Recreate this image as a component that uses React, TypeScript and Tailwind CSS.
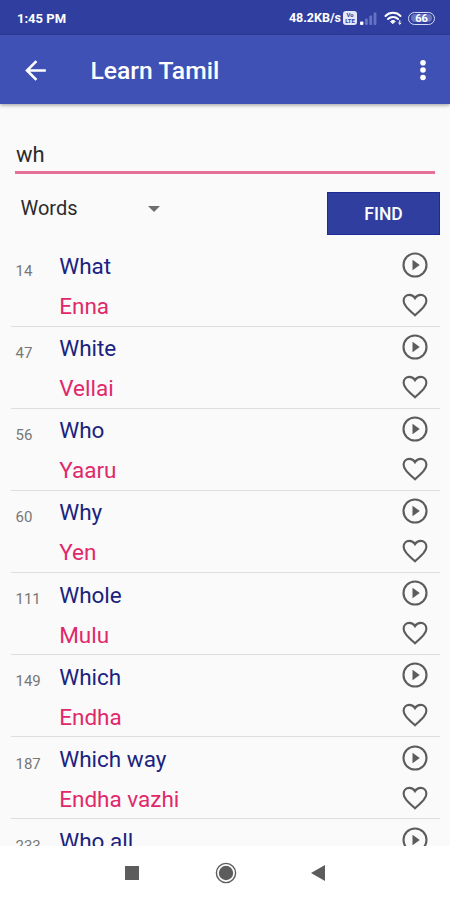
import React, { useState } from 'react';

const words = [
  { id: 14, english: "What", tamil: "Enna" },
  { id: 47, english: "White", tamil: "Vellai" },
  { id: 56, english: "Who", tamil: "Yaaru" },
  { id: 60, english: "Why", tamil: "Yen" },
  { id: 111, english: "Whole", tamil: "Mulu" },
  { id: 149, english: "Which", tamil: "Endha" },
  { id: 187, english: "Which way", tamil: "Endha vazhi" },
  { id: 233, english: "Who all", tamil: "" },
];

const PlayIcon: React.FC = () => (
  <svg viewBox="0 0 24 24" className="h-[30px] w-[30px]">
    <circle cx="12" cy="12" r="9.2" fill="none" stroke="#5c5c5c" strokeWidth="1.7" />
    <path d="M10 16.2l5.8-4.2L10 7.8z" fill="#5c5c5c" />
  </svg>
);

const HeartIcon: React.FC = () => (
  <svg viewBox="0 0 24 24" className="h-[30px] w-[30px]" fill="none" stroke="#5c5c5c" strokeWidth="1.7">
    <path d="M12 20.2l-1.1-1C6 14.8 2.9 12 2.9 8.5c0-2.6 2-4.6 4.6-4.6 1.8 0 3.5 1 4.5 2.6 1-1.6 2.7-2.6 4.5-2.6 2.6 0 4.6 2 4.6 4.6 0 3.5-3.1 6.3-8 10.7z" />
  </svg>
);

const StatusBar: React.FC = () => (
  <div className="flex h-[35px] shrink-0 items-center bg-[#303f9f] pl-[17px] pr-[15px] pt-px text-white">
    <span className="text-[13px] font-bold leading-none">1:45 PM</span>
    <span className="ml-auto text-[12.5px] font-bold leading-none">48.2KB/s</span>
    {/* VoLTE badge */}
    <span className="ml-[2px] flex h-[14px] w-[14px] flex-col items-center justify-center rounded-[3px] bg-[#e4e8fa] text-[6px] font-bold leading-[6px] text-[#303f9f]">
      <span>Vo</span>
      <span>LTE</span>
    </span>
    <svg viewBox="0 0 18 13" className="ml-[3px] h-[13px] w-[18px]">
      <rect x="0" y="9.5" width="3.4" height="3.5" rx="1" fill="#fff" />
      <g fill="#6673c2">
        <rect x="5" y="6.5" width="2.8" height="6.5" rx="1" />
        <rect x="9.3" y="3.5" width="2.8" height="9.5" rx="1" />
        <rect x="13.6" y="0.5" width="2.8" height="12.5" rx="1" />
      </g>
    </svg>
    <svg viewBox="0 0 18 14" className="ml-[6px] h-[14px] w-[18px]" fill="none" stroke="#fff" strokeLinecap="round">
      <path d="M1.5 5C5.5 .8 12.5 .8 16.5 5" strokeWidth="2" />
      <path d="M4 8c2.8-2.8 7.2-2.8 10 0" strokeWidth="2" />
      <path d="M6.8 10.3c1.3-1.1 3.1-1.1 4.4 0L9 12.5z" fill="#fff" strokeWidth="1" />
      <path d="M15.8 9.5v3.5M14.6 12l1.2 1.2L17 12" strokeWidth="1" />
    </svg>
    <span className="ml-[6px] flex h-[13px] w-[27px] items-center justify-center rounded-full border-[1.5px] border-[#d5daf3] px-[2px]">
      <span className="flex h-[8px] w-full items-center justify-center rounded-full bg-[#6874c0] text-[11px] font-bold leading-none">66</span>
    </span>
  </div>
);

const AppBar: React.FC = () => (
  <header className="z-10 flex h-[69px] shrink-0 items-center bg-[#3f51b5] pl-[20px] pr-[9px] text-white shadow-[0_1px_4px_rgba(0,0,0,0.4)]">
    <svg viewBox="0 0 24 24" className="mt-[2px] h-[31px] w-[31px] fill-white">
      <path d="M20 11H7.83l5.59-5.59L12 4l-8 8 8 8 1.41-1.41L7.83 13H20v-2z" />
    </svg>
    <h1 className="ml-[39.5px] mt-[3px] text-[24.7px] font-medium leading-none">Learn Tamil</h1>
    <svg viewBox="0 0 36 36" className="ml-auto h-[36px] w-[36px] fill-white">
      <circle cx="18" cy="10.7" r="2.8" />
      <circle cx="18" cy="18" r="2.8" />
      <circle cx="18" cy="25.5" r="2.8" />
    </svg>
  </header>
);

const App: React.FC = () => {
  const [query, setQuery] = useState("wh");

  return (
    <div className="flex h-[900px] w-[450px] flex-col overflow-hidden bg-[#fafafa] font-['Roboto',sans-serif]">
      <StatusBar />
      <AppBar />

      <div className="shrink-0 px-[15px] pt-[30px]">
        <input
          value={query}
          onChange={(e) => setQuery(e.target.value)}
          className="block h-[40px] w-full border-b-[3px] border-[#e5719a] bg-transparent pl-px pt-[3px] text-[22px] text-[#2b2b2b] outline-none"
        />
      </div>

      <div className="flex h-[70.5px] shrink-0 items-start pl-[20.5px] pr-[10px] pt-[18px]">
        <button className="flex w-[139.5px] items-center justify-between text-[20px] leading-[33px] text-[#2b2b2b]">
          Words
          <svg viewBox="0 0 12 6" className="h-[6px] w-[12px] fill-[#6e6e6e]">
            <path d="M0 0h12L6 6z" />
          </svg>
        </button>
        <button className="ml-auto h-[43px] w-[113px] bg-[#303f9f] pt-[2px] text-[17.5px] font-medium text-white shadow-[inset_0_0_0_1px_#1c2b98]">
          FIND
        </button>
      </div>

      <ul className="min-h-0 flex-1 overflow-hidden pl-[11px] pr-[10px]">
        {words.map((word) => (
          <li key={word.id} className="flex h-[82.1px] border-b-[1.5px] border-[#dedede]">
            <span className="w-[48.2px] pl-[4.5px] pt-[16.5px] text-[15px] leading-[20px] text-[#777]">{word.id}</span>
            <div className="flex-1 pt-[1.7px] text-[22.5px] leading-[40px]">
              <p className="text-[#1a237e]">{word.english}</p>
              <p className="text-[#e0286a]">{word.tamil}</p>
            </div>
            <div className="flex flex-col gap-[10px] pr-[9.8px] pt-[5.5px]">
              <PlayIcon />
              <HeartIcon />
            </div>
          </li>
        ))}
      </ul>

      <nav className="flex h-[54px] shrink-0 items-center bg-white pl-[125px]">
        <span className="h-[14px] w-[14px] bg-[#5c5c5c]" />
        <svg viewBox="0 0 22 22" className="ml-[76px] h-[22px] w-[22px]">
          <circle cx="11" cy="11" r="9.6" fill="none" stroke="#5c5c5c" strokeWidth="1.4" />
          <circle cx="11" cy="11" r="7.2" fill="#5c5c5c" />
        </svg>
        <svg viewBox="0 0 14 16" className="ml-[74px] h-[16px] w-[14px] fill-[#5c5c5c]">
          <path d="M14 0v16L0 8z" />
        </svg>
      </nav>
    </div>
  );
};

export default App;
